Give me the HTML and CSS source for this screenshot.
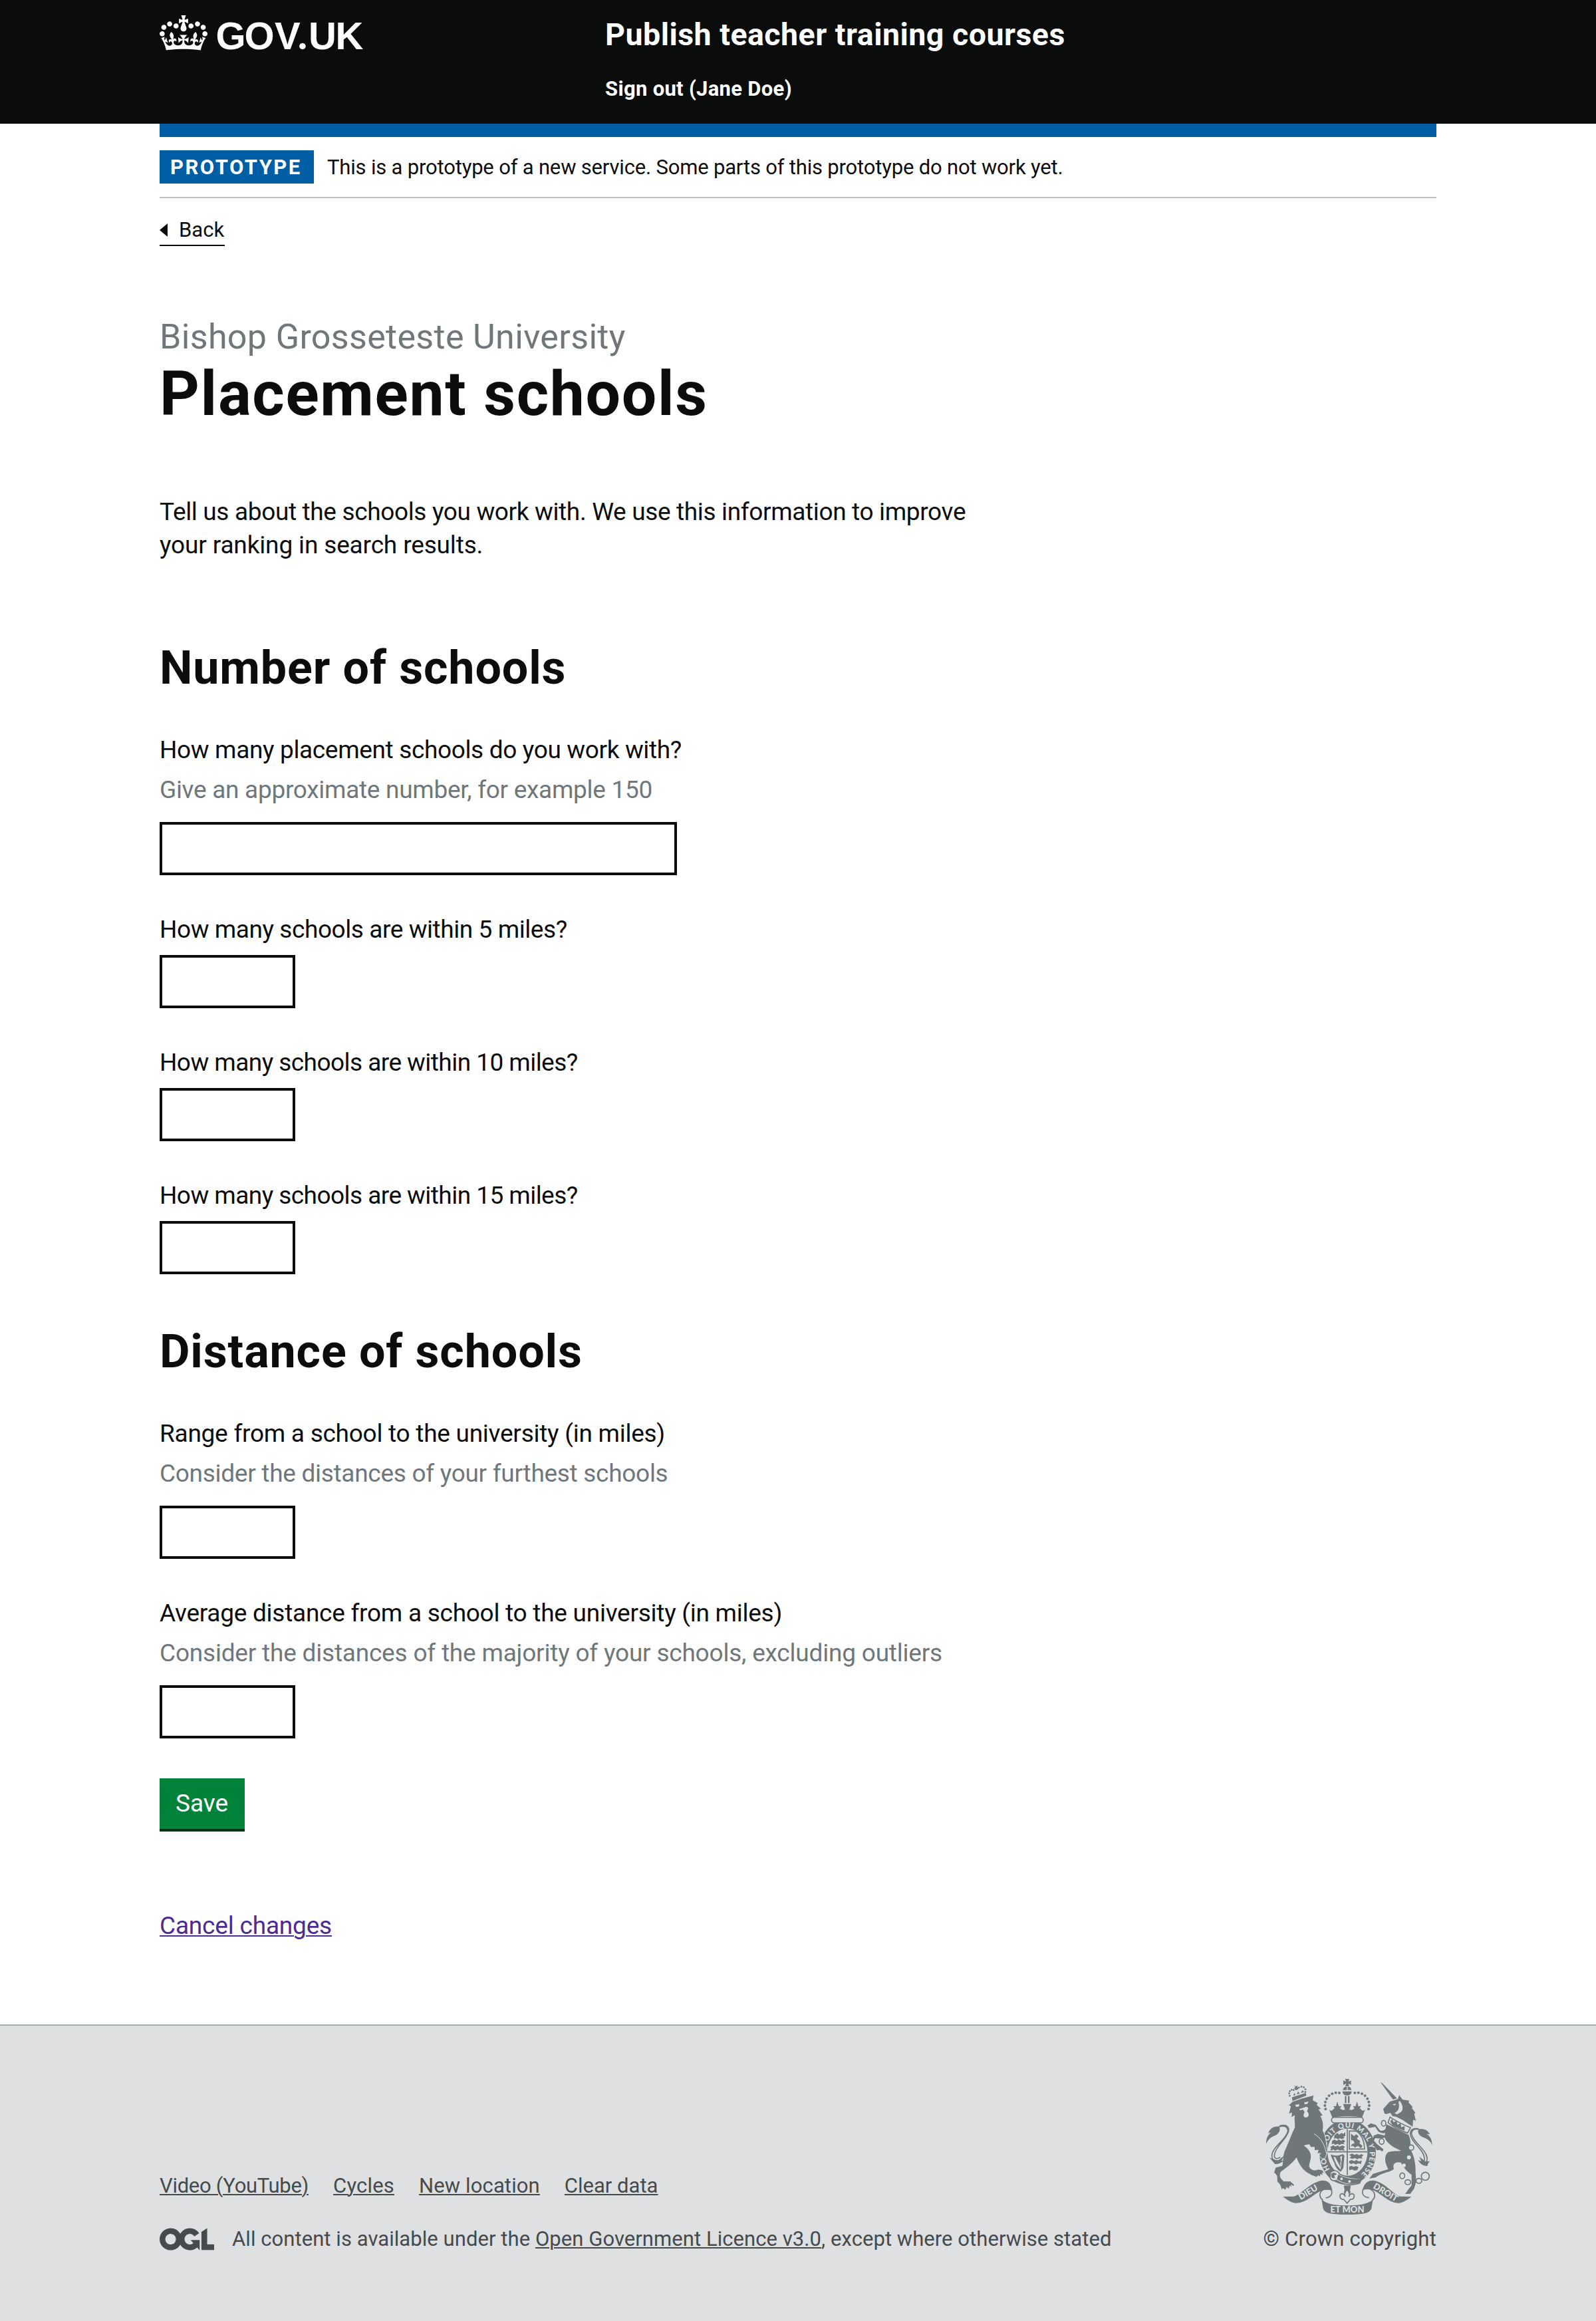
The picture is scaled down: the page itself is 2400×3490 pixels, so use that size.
FILE: index.html
```html
<!DOCTYPE html>
<html lang="en">
<head>
<meta charset="utf-8">
<title>Placement schools</title>
<link rel="stylesheet" href="styles.css">
</head>
<body>
<header class="header">
  <div class="container header-row">
    <a class="logo" href="#" aria-label="GOV.UK">
      <svg width="330" height="76" viewBox="0 -13 330 76">
        <svg x="0" y="0" width="72" height="53" viewBox="0 0 132 97"><path fill="#fff" d="M25 30.2c3.5 1.5 7.7-.2 9.1-3.7 1.5-3.6-.2-7.8-3.9-9.2-3.6-1.4-7.6.3-9.1 3.9-1.4 3.5.3 7.5 3.9 9zM9 39.5c3.6 1.5 7.8-.2 9.2-3.7 1.5-3.6-.2-7.8-3.9-9.1-3.6-1.5-7.6.2-9.1 3.8-1.4 3.5.3 7.5 3.8 9zM4.4 57.2c3.5 1.5 7.7-.2 9.1-3.8 1.5-3.6-.2-7.7-3.9-9.1-3.5-1.5-7.6.3-9.1 3.8-1.4 3.5.3 7.6 3.9 9.1zm38.3-21.4c3.5 1.5 7.7-.2 9.1-3.8 1.5-3.6-.2-7.7-3.9-9.1-3.6-1.5-7.6.3-9.1 3.8-1.3 3.6.4 7.7 3.9 9.1zm64.4-5.6c-3.6 1.5-7.8-.2-9.1-3.7-1.5-3.6.2-7.8 3.8-9.2 3.6-1.4 7.7.3 9.2 3.9 1.3 3.5-.4 7.5-3.9 9zm15.9 9.3c-3.6 1.5-7.7-.2-9.1-3.7-1.5-3.6.2-7.8 3.7-9.1 3.6-1.5 7.7.2 9.2 3.8 1.5 3.5-.3 7.5-3.8 9zm4.7 17.7c-3.6 1.5-7.8-.2-9.2-3.8-1.5-3.6.2-7.7 3.9-9.1 3.6-1.5 7.7.3 9.2 3.8 1.3 3.5-.4 7.6-3.9 9.1zM89.3 35.8c-3.6 1.5-7.8-.2-9.2-3.8-1.4-3.6.2-7.7 3.9-9.1 3.6-1.5 7.7.3 9.2 3.8 1.4 3.6-.3 7.7-3.9 9.1zM69.7 17.7l8.9 4.7V9.3l-8.9 2.8c-.2-.3-.5-.6-.9-.9L72.4 0H59.6l3.5 11.2c-.3.3-.6.5-.9.9l-8.8-2.8v13.1l8.8-4.7c.3.3.6.7.9.9l-5 15.4v.1c-.2.8-.4 1.6-.4 2.4 0 4.1 3.1 7.5 7 8.1h.2c.3 0 .7.1 1 .1.4 0 .7 0 1-.1h.2c4-.6 7.1-4.1 7.1-8.1 0-.8-.1-1.7-.4-2.4V34l-5.1-15.4c.4-.2.7-.6 1-.9zM66 92.8c16.9 0 32.8 1.1 47.1 3.2 4-16.9 8.9-26.7 14-33.5l-9.6-3.4c1 4.9 1.1 7.2 0 10.2-1.5-1.4-3-4.3-4.2-8.7L108.6 76c2.8-2 5-3.2 7.5-3.3-4.4 9.4-10 11.9-13.6 11.2-4.3-.8-6.3-4.6-5.6-7.9 1-4.7 5.7-5.9 8-.5 4.3-8.7-3-11.4-7.6-8.8 7.1-7.2 7.9-13.5 2.1-21.1-8 6.1-8.1 12.3-4.5 20.8-4.7-5.4-12.1-2.5-9.5 6.2 3.4-5.2 7.9-2 7.2 3.1-.6 4.3-6.4 7.8-13.5 7.2-10.3-.9-10.9-8-11.2-13.8 2.5-.5 7.1 1.8 11 7.3L80.2 60c-4.1 4.4-8 5.3-12.3 5.4 1.4-4.4 8-11.6 8-11.6H55.5s6.4 7.2 7.9 11.6c-4.2-.1-8-1-12.3-5.4l1.4 16.4c3.9-5.5 8.5-7.7 10.9-7.3-.3 5.8-.9 12.8-11.1 13.8-7.2.6-12.9-2.9-13.5-7.2-.7-5 3.8-8.3 7.1-3.1 2.7-8.7-4.6-11.6-9.4-6.2 3.7-8.5 3.6-14.7-4.6-20.8-5.8 7.6-5 13.9 2.2 21.1-4.7-2.6-11.9.1-7.7 8.8 2.3-5.5 7.1-4.2 8.1.5.7 3.3-1.3 7.1-5.7 7.9-3.5.7-9-1.8-13.5-11.2 2.5.1 4.7 1.3 7.5 3.3l-4.7-15.4c-1.2 4.4-2.7 7.2-4.3 8.7-1.1-3-.9-5.3 0-10.2l-9.5 3.4c5 6.9 9.9 16.7 14 33.5 14.8-2.1 30.8-3.2 47.7-3.2z"/></svg>
        <text class="logo-text" x="84.5 127.5 173" y="51">GOV<tspan class="logo-dot" x="208">.</tspan><tspan x="224 264.5">UK</tspan></text>
      </svg>
    </a>
    <div class="header-content">
      <a class="service-name" href="#">Publish teacher training courses</a>
      <a class="sign-out" href="#">Sign out (Jane Doe)</a>
    </div>
  </div>
</header>

<div class="container">
  <div class="blue-bar"></div>
  <div class="phase-banner">
    <strong class="tag">PROTOTYPE</strong>
    <span class="phase-text">This is a prototype of a new service. Some parts of this prototype do not work yet.</span>
  </div>
  <a class="back-link" href="#">Back</a>

  <main>
    <div class="caption">Bishop Grosseteste University</div>
    <h1 class="heading-xl">Placement schools</h1>
    <p class="intro">Tell us about the schools you work with. We use this information to improve<br><span class="intro-end">your ranking in search results.</span></p>

    <form>
      <h2 class="heading-l">Number of schools</h2>
      <div class="field">
        <label class="label" for="total">How many placement schools do you work with?</label>
        <span class="hint">Give an approximate number, for example 150</span>
        <input class="input input-wide" id="total" type="text">
      </div>
      <div class="field">
        <label class="label label-within" for="within-5">How many schools are within 5 miles?</label>
        <input class="input" id="within-5" type="text">
      </div>
      <div class="field">
        <label class="label label-within-far" for="within-10">How many schools are within 10 miles?</label>
        <input class="input" id="within-10" type="text">
      </div>
      <div class="field">
        <label class="label label-within-far" for="within-15">How many schools are within 15 miles?</label>
        <input class="input" id="within-15" type="text">
      </div>

      <h2 class="heading-l heading-distance">Distance of schools</h2>
      <div class="field">
        <label class="label label-distance" for="range">Range from a school to the university (in miles)</label>
        <span class="hint">Consider the distances of your furthest schools</span>
        <input class="input" id="range" type="text">
      </div>
      <div class="field">
        <label class="label label-distance" for="average">Average distance from a school to the university (in miles)</label>
        <span class="hint hint-long">Consider the distances of the majority of your schools, excluding outliers</span>
        <input class="input" id="average" type="text">
      </div>
      <button class="button" type="button">Save</button>
    </form>
    <a class="cancel" href="#">Cancel changes</a>
  </main>
</div>

<footer class="footer">
  <div class="container footer-row">
    <div class="footer-main">
      <nav class="footer-links">
        <a class="link-video" href="#">Video (YouTube)</a>
        <a class="link-cycles" href="#">Cycles</a>
        <a class="link-location" href="#">New location</a>
        <a class="link-clear" href="#">Clear data</a>
      </nav>
      <div class="licence">
        <svg class="ogl" width="82" height="34" viewBox="0 0 483.2 195.7"><path fill="currentColor" d="M421.5 142.8V.1l-50.7 32.3v161.1h112.4v-50.7zm-122.3-9.6A47.12 47.12 0 0 1 221 97.8c0-26 21.1-47.1 47.1-47.1 16.7 0 31.4 8.7 39.7 21.8l42.7-27.2A97.63 97.63 0 0 0 268.1 0c-36.5 0-68.3 20.1-85.1 49.7A98 98 0 0 0 97.8 0C43.9 0 0 43.9 0 97.8s43.9 97.8 97.8 97.8c36.5 0 68.3-20.1 85.1-49.7a97.76 97.76 0 0 0 149.6 25.4l19.4 22.2h3v-87.8h-80l24.3 27.5zM97.8 145c-26 0-47.1-21.1-47.1-47.1s21.1-47.1 47.1-47.1 47.1 21.1 47.1 47.1S123.8 145 97.8 145"/></svg>
        <span class="licence-text">All content is available under the <a href="#">Open Government Licence v3.0</a>, except where otherwise stated</span>
      </div>
    </div>
    <div class="copyright">
      <svg class="crest" width="250" height="204" viewBox="72 48 750 612">
        <!-- crown and garter -->
        <g class="ink">
          <path d="M428 48h19l-4 12 12-5v20l-12-6 3 12h-17l4-12-13 6V55l13 5zM430 83h6v15h-18c1-8 5-13 12-15zM440 83h5c7 2 11 7 12 15h-17zM416 104h42c-1 12-9 18-21 18s-20-6-21-18zM427 125h7v32h-7zM441 125h7v32h-7z"/>
          <path d="M356 185c8 9 14 8 20-1l5-3-6-11 12 2 6-22 7 22 11-2-6 12 12 6 11-1-9-26h37l-9 26 11 1 12-6-6-12 11 2 7-22 6 22 12-2-6 11 5 3c6 9 12 10 20 1l-14 36c-42-7-93-7-135 0z"/>
          <circle cx="340" cy="184" r="6"/><circle cx="337" cy="168" r="6"/><circle cx="339" cy="152" r="6"/><circle cx="345" cy="137" r="6"/><circle cx="356" cy="124" r="6"/><circle cx="370" cy="115" r="6"/><circle cx="386" cy="110" r="6"/><circle cx="402" cy="111" r="6"/>
          <circle cx="534" cy="184" r="6"/><circle cx="537" cy="168" r="6"/><circle cx="535" cy="152" r="6"/><circle cx="529" cy="137" r="6"/><circle cx="518" cy="124" r="6"/><circle cx="504" cy="115" r="6"/><circle cx="488" cy="110" r="6"/><circle cx="472" cy="111" r="6"/>
          <path fill-rule="evenodd" d="M438 231c72 0 129 66 129 148s-57 147-129 147-126-65-126-147 54-148 126-148zm1 41c-50 0-90 48-90 106s40 107 90 107 90-49 90-107-40-106-90-106z"/>
        </g>
        <rect class="paper outline" x="367" y="221" width="143" height="25" rx="12"/>
        <path id="garter" class="none" d="M360 456A100 117 0 1 1 502 476"/>
        <text class="motto garter-text"><textPath href="#garter" startOffset="0" textLength="520">HONI SOIT QUI MAL Y PENSE</textPath></text>
        <!-- shield -->
        <path class="line" d="M438 274v208M350 377h178M447 283h30c25 14 37 43 39 81h-69z"/>
        <g class="ink">
          <path d="M380 302l14-10 8 8 10-9 8 5 9-8v17l-9 3 6 5-12 7-10-5-8 6-9-6-9 3zM369 328l12-7 8 6 12-6 8 6 12-5 8 8-8 6 4 7-15-2-7 6-8-6-13 5-4-6-10 3zM361 355l14-8 9 6 11-5 8 6 12-6 13 6-7 8 6 10-15-3-9 2-8-5-12 6-6-5-16 4 4-9zM447 390l14-5 9 6 11-5 9 6 12-5 9 6-9 7 5 8-16-2-8 5-10-6-12 4-13-5 8-6zM447 418l12-4 10 5 10-5 11 6 13-4-3 15-14-2-9 5-11-6-11 4-9-5zM446 444l11-4 9 5 11-4 12 5-6 14-14 1-9-5-13 4zM454 294l15 12 8-8 12 8-8 12 15 10-3 11 14 11-8 11-12-11-15 8-8-8-10 3 5-12 12-2-5-12-11-4z"/>
          <path fill-rule="evenodd" d="M363 388c18 9 34 7 55-1l7 7-5 55-12 18c-18-11-26-28-28-39-7-12-13-25-17-40zm13 12c8 28 18 43 32 57l7-62c-15 6-27 7-39 5z"/>
          <path d="M383 400l25 47-4-48zM394 400l16 29-4-31z"/>
        </g>
        <!-- belt buckle -->
        <path class="paper outline" d="M362 470c11-14 33-10 42 8 31 16 68 18 98 18l-8 22c-35 12-74 8-105-12-17 5-28-3-29-15z"/>
        <path class="ink" d="M397 479c32 18 70 23 108 19l-8 18c-38 11-78 4-106-15z"/>
        <path class="ink" d="M366 476c8-8 20-6 25 3l-12 4 4 12c-9 4-17-1-18-9z"/>
        <g class="paper"><circle cx="412" cy="499" r="6"/><circle cx="448" cy="511" r="6"/></g>
        <!-- lion -->
        <path class="ink" stroke="#dee0e2" stroke-width="3" d="M172 168l19-18 39-14 57-15-3 23 22 12-4 10 20 18-12 2 19 28-11 2c12 20 14 45 10 65 14 24 16 60 21 94l-11 31-15 2-12-13 7-12-16 2 5-16-17 2-1-15-15 1-8-13-22 5c19 13 32 31 31 51-3 27-12 38-5 49 8 8 16 11 25 10l14-4 18 5 8 16-9-4 2 12-10-6-2 12-9-6-8 7-22-8-14-8c-25-12-47-47-54-71-14 21-48 48-70 63-8 15-3 29 12 42h30l19 17-6 6-9-6 4 13-10-8-5 14-9-8-6 13-11-8-6 7-8-24-13-15-1-25-13-16 7-22 30-8c4-28 3-57 15-76 16-35 25-65 41-96 3-19-5-38 0-53l-15 8 2-21-14 6 9-36z"/>
        <g class="paper"><path d="M202 165l20-3-2 10-12 3zM244 154l19-4-4 10-14 3zM222 184l14-5 18-6 8 6-6 15c12 9 11 27-6 28-12-1-11-17-4-24l-8-12-14 4z"/></g>
        <path class="line fine" d="M288 296c31 17 46 45 56 88"/>
        <g class="ink">
          <path d="M188 131l62-20 4 12-63 25z"/><path d="M194 123l5-12 6 10zM210 118l6-14 8 10zM229 111l7-13 7 9zM199 77l8 5 7-5-1 9 6 3-6 8-9 1-6-8 6-4z"/>
          <circle cx="178" cy="124" r="4"/><circle cx="176" cy="113" r="4"/><circle cx="179" cy="103" r="4"/><circle cx="187" cy="97" r="4"/><circle cx="196" cy="98" r="4"/><circle cx="220" cy="87" r="4"/><circle cx="231" cy="83" r="4"/><circle cx="242" cy="86" r="4"/><circle cx="249" cy="95" r="4"/><circle cx="249" cy="107" r="4"/>
          <path d="M72 341c0-26 8-42 24-52l-15 4c9-22 25-34 50-30 9 20-5 36-27 44-16 7-26 19-32 34zM86 402l17 8 22 6 29-22-13 23 10-1c-12 12-25 17-39 16z"/>
        </g>
        <path class="line tail" d="M124 267c38-17 57 6 38 34-18 32-62 60-64 91-1 24 16 29 32 24M132 260c38-12 53 13 32 43-18 31-48 54-54 84-4 24 10 24 26 14"/>
        <!-- unicorn -->
        <g class="ink">
          <path d="M588 63l9 5 65 68-18 5zM600 184l29-33 38-12 5-18 15 20 31 5-4 8 19 21-4 4 17 23-6 2 7 33-12-5-2 31-23-14-20-14-31-16-18-4-8-14-18 5-9-1z"/>
          <path d="M614 252l101 49c8 19 10 41 8 66 17 27 24 66 23 103l3 41-10 33-17 22-23 1 15-22 14-16V480c-22-15-37-34-48-55-24-6-40 6-32 28-8 15-54 17-81 39l-30 6 17-22 69-21c-17-29-20-60-1-76 21-9 43-3 60-7-35-13-67-35-76-61z"/>
          <path d="M622 283c-12 13-28 13-45 1l-13-20-28 5-7-11 16-10 22 8 18 24c13 5 23-2 31-13zM619 306c-15 11-38 12-55 9l-6 11 15 17 28 22-4 11-12-8-14 2-5-12-18-29 10-26 18-7z"/>
          <path d="M821 347c-1-26-9-41-26-51l15 2c-9-19-25-27-50-23-8 17 4 31 28 39 15 6 27 17 33 33zM811 419l-21 2-27-23 9 22-15-6c10 18 21 25 42 27 2-11 6-18 12-22z"/>
        </g>
        <path class="line tail" d="M769 279c-38-14-50 9-33 36 17 31 57 54 62 89 2 21-11 25-28 18M760 273c-35-7-46 16-31 43 15 31 54 54 57 88 2 18-5 19-16 13"/>
        <path class="paper outline" d="M631 220c32 22 61 35 92 48l-13 24c-31-10-61-24-88-47z"/>
        <path class="ink" d="M632 240l8-12 7 16 14-8 3 19 15-7 2 18 16-5-1 20-24-8-30-16z"/>
        <g class="paper"><path d="M641 163l17-3-5 8zM674 147c13 14 18 34 9 48l-20 13-13-6c20-8 25-25 19-50z"/><circle cx="716" cy="402" r="9"/><circle cx="694" cy="438" r="8"/><circle cx="726" cy="358" r="12"/></g>
        <g class="line chain"><ellipse cx="602" cy="248" rx="10" ry="13"/><ellipse cx="593" cy="330" rx="11" ry="13"/><circle cx="726" cy="358" r="12"/><ellipse cx="686" cy="485" rx="11" ry="13"/><ellipse cx="711" cy="514" rx="13" ry="11"/><ellipse cx="761" cy="508" rx="13" ry="11"/><circle cx="790" cy="487" r="18"/></g>
        <!-- ribbon -->
        <path class="ink" d="M148 579l50-1c39-15 75-65 127-72 29 0 39 13 46 46-26-8-50-5-76 15-33 24-57 41-92 41-18-2-34-13-55-29zM727 579l-50-1c-38-15-71-65-122-72-28 0-40 13-49 44 28-9 54-3 78 17 33 24 56 41 88 41 18-2 35-13 55-29zM322 592c14 12 30 18 50 22 44 6 88 6 132 0 20-4 36-10 50-22l-7 40c-5 14-19 21-41 24-46 6-92 6-138 0-22-3-34-10-39-24z"/>
        <path class="line tail" d="M366 550c8 18-4 32-25 35M333 546c-22 9-25 35-5 48M509 547c-8 20 3 34 27 37M542 546c22 9 26 36 9 49"/>
        <text class="motto" x="260" y="573" transform="rotate(-31 260 558)">DIEU</text>
        <text class="motto" x="612" y="573" transform="rotate(31 612 558)">DROIT</text>
        <text class="motto" x="438" y="651">ET MON</text>
        <path class="ink" d="M422 529h32l-4 22 4 10h-33l5-10z"/>
        <path class="paper outline" d="M437 548c12 11 14 20 8 31 7-19 26-16 24 0-2 9-8 14-16 12l-6 6-10 12-10-12-6-6c-8 2-14-3-16-12-2-16 17-19 24 0-6-11-4-20 8-31z"/>
      </svg>
      <a class="copyright-text" href="#">© Crown copyright</a>
    </div>
  </div>
</footer>
</body>
</html>
```

FILE: styles.css
```css
* { box-sizing: border-box; }
body {
  margin: 0;
  background: #fff;
  color: #0b0c0c;
  font-family: Roboto, sans-serif;
  font-size: 37px;
  line-height: 50px;
}
h1, h2, p { margin: 0; }
.container { width: 1920px; margin: 0 auto; }

.header { height: 186px; background: #0b0c0c; }
.header a { color: #fff; text-decoration: none; font-weight: 700; }
.header-row { display: flex; }
.logo { width: 670px; padding-top: 10px; }
.logo svg { display: block; }
.logo-text { font: 700 58px "Liberation Sans", sans-serif; fill: #fff; }
.logo-dot { font-family: Lato, sans-serif; font-weight: 900; }
.header-content { display: flex; flex-direction: column; align-items: flex-start; padding-top: 25px; }
.service-name { font-size: 46.5px; line-height: 54px; letter-spacing: .0105em; }
.sign-out { margin-top: 36px; font-size: 31px; line-height: 37px; letter-spacing: .01em; }

.blue-bar { height: 20px; background: #005ea5; }
.phase-banner { display: flex; gap: 20px; padding: 20px 0; border-bottom: 2px solid #bfc1c3; }
.tag {
  width: 232px;
  height: 50px;
  padding-left: 16px;
  background: #005ea5;
  color: #fff;
  font-size: 31px;
  line-height: 51px;
  letter-spacing: .08em;
}
.phase-text { height: 50px; font-size: 31px; line-height: 51px; letter-spacing: -.0058em; }
.back-link {
  display: flex;
  align-items: center;
  gap: 17px;
  width: 98px;
  height: 45px;
  margin-top: 27px;
  padding-bottom: 2px;
  border-bottom: 2px solid #0b0c0c;
  color: #0b0c0c;
  font-size: 31px;
  line-height: 41px;
  text-decoration: none;
}
.back-link::before {
  content: "";
  border: solid transparent;
  border-width: 10px 12px 10px 0;
  border-right-color: #0b0c0c;
}

.caption { margin-top: 106px; color: #6f777b; font-size: 52px; line-height: 61px; letter-spacing: .0065em; }
.heading-xl { margin-top: 1px; font-size: 93px; line-height: 109px; letter-spacing: .018em; }
.intro { margin-top: 98px; letter-spacing: -.0095em; }
.intro-end { letter-spacing: -.004em; }
.heading-l { margin: 118px 0 58px; font-size: 70px; line-height: 82px; letter-spacing: .0125em; }
.heading-distance { margin-top: 75px; }

.field { display: flex; flex-direction: column; align-items: flex-start; gap: 13px; }
.field + .field { margin-top: 57px; }
.label { letter-spacing: -.0095em; }
.label-within { letter-spacing: -.0115em; }
.label-within-far { letter-spacing: -.0148em; }
.label-distance { letter-spacing: -.007em; }
.hint { margin: -3px 0 10px; color: #6f777b; letter-spacing: -.0078em; }
.hint-long { letter-spacing: -.0055em; }
.input { width: 204px; height: 80px; border: 4px solid #0b0c0c; border-radius: 0; background: #fff; }
.input-wide { width: 778px; }
.button {
  display: block;
  width: 128px;
  height: 80px;
  margin-top: 60px;
  padding: 11px 0 15px 24px;
  border: 0;
  background: #00823b;
  box-shadow: inset 0 -4px #003618;
  color: #fff;
  font: inherit;
  text-align: left;
}
.cancel {
  display: block;
  width: max-content;
  margin: 117px 0 123px;
  color: #4c2c92;
  letter-spacing: -.005em;
  text-decoration-thickness: 2px;
  text-underline-offset: 2px;
}

.footer { height: 446px; border-top: 2px solid #a1acb2; background: #dee0e2; color: #454a4c; font-size: 31px; line-height: 41px; }
.footer a { color: #454a4c; text-decoration-thickness: 2px; text-underline-offset: 2px; }
.footer-row { display: flex; justify-content: space-between; align-items: flex-end; padding-top: 80px; }
.footer-links { display: flex; gap: 37px; }
.link-video { letter-spacing: -.01em; }
.link-cycles { letter-spacing: .006em; }
.link-location { letter-spacing: .004em; }
.licence { display: flex; align-items: flex-start; gap: 27px; margin-top: 39px; }
.licence-text { letter-spacing: .002em; }
.ogl { margin-top: 4px; }
.copyright { display: flex; flex-direction: column; align-items: flex-end; }
.copyright .copyright-text { text-decoration: none; letter-spacing: .007em; }
.crest { margin: 0 6px 16px 0; }

.crest .ink { fill: #6f777b; }
.crest .paper { fill: #dee0e2; }
.crest .none { fill: none; }
.crest .outline { stroke: #6f777b; stroke-width: 5px; }
.crest .line { fill: none; stroke: #6f777b; stroke-width: 5px; }
.crest .line.fine { stroke: #dee0e2; stroke-width: 3px; }
.crest .motto { font: 900 39px Lato, sans-serif; fill: #dee0e2; text-anchor: middle; }
.crest .motto.garter-text { font-size: 33px; text-anchor: start; }
```
